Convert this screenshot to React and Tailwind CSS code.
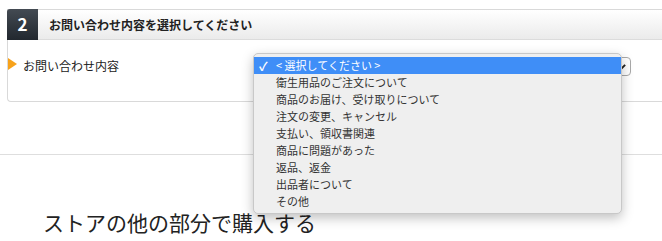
import React from "react";

const options = [
  "衛生用品のご注文について",
  "商品のお届け、受け取りについて",
  "注文の変更、キャンセル",
  "支払い、領収書関連",
  "商品に問題があった",
  "返品、返金",
  "出品者について",
  "その他",
];

const jp = { fontFamily: '"Noto Sans CJK JP", "Noto Sans", sans-serif' };

export default function App() {
  return (
    <div className="relative h-[241px] w-[662px] overflow-hidden bg-white text-[#333]" style={jp}>
      <div className="pt-[9px] pl-[7px]">
        <div className="w-[680px] rounded-bl-[4px] border border-r-0 border-[#d9d9d9]">
          <div className="flex h-[30px] items-center border-b border-[#dcdcdc] bg-gradient-to-b from-white to-[#ebebeb]">
            <div className="-mt-px -ml-px flex h-[31px] w-[31px] items-center justify-center rounded-tl-[3px] bg-gradient-to-b from-[#444b53] to-[#22282f] text-[17px] font-bold text-white">
              2
            </div>
            <div className="ml-[11px] text-[12px] font-bold text-[#222]">
              お問い合わせ内容を選択してください
            </div>
          </div>
          <div className="flex h-[61px] items-start pt-[17px]">
            <div className="mt-px h-0 w-0 border-y-[6px] border-l-[9px] border-y-transparent border-l-[#f7a21b]" />
            <div className="ml-[6px] text-[12px] leading-[17px] text-[#222]">お問い合わせ内容</div>
            <div className="ml-[134px] flex h-[19px] w-[378px] items-center justify-end rounded-[4px] border border-[#a9a9a9] bg-white pr-[4px]">
              <div className="h-[2px] w-[6px] -rotate-45 bg-[#222]" />
            </div>
          </div>
        </div>
      </div>
      <div className="mt-[52px] border-t border-[#dedede]" />
      <h2 className="mt-[55px] ml-[43px] text-[21px] leading-[24px] text-[#222]">
        ストアの他の部分で購入する
      </h2>

      <div className="absolute left-[253px] top-[53px] w-[369px] rounded-[5px] border border-[#c8c8c8] bg-[#efefef] py-[3px] shadow-[0_4px_12px_rgba(0,0,0,0.25)]">
        <div className="flex h-[17px] items-center bg-[#3f8ef7] text-[11px] leading-[17px] text-white">
          <span className="w-[22px] pl-[5px] text-[12px] font-bold">✓</span>
          <span>&lt; 選択してください &gt;</span>
        </div>
        {options.map((o) => (
          <div key={o} className="flex h-[17px] items-center pl-[22px] text-[11px] leading-[17px] text-[#333]">
            {o}
          </div>
        ))}
      </div>
    </div>
  );
}
